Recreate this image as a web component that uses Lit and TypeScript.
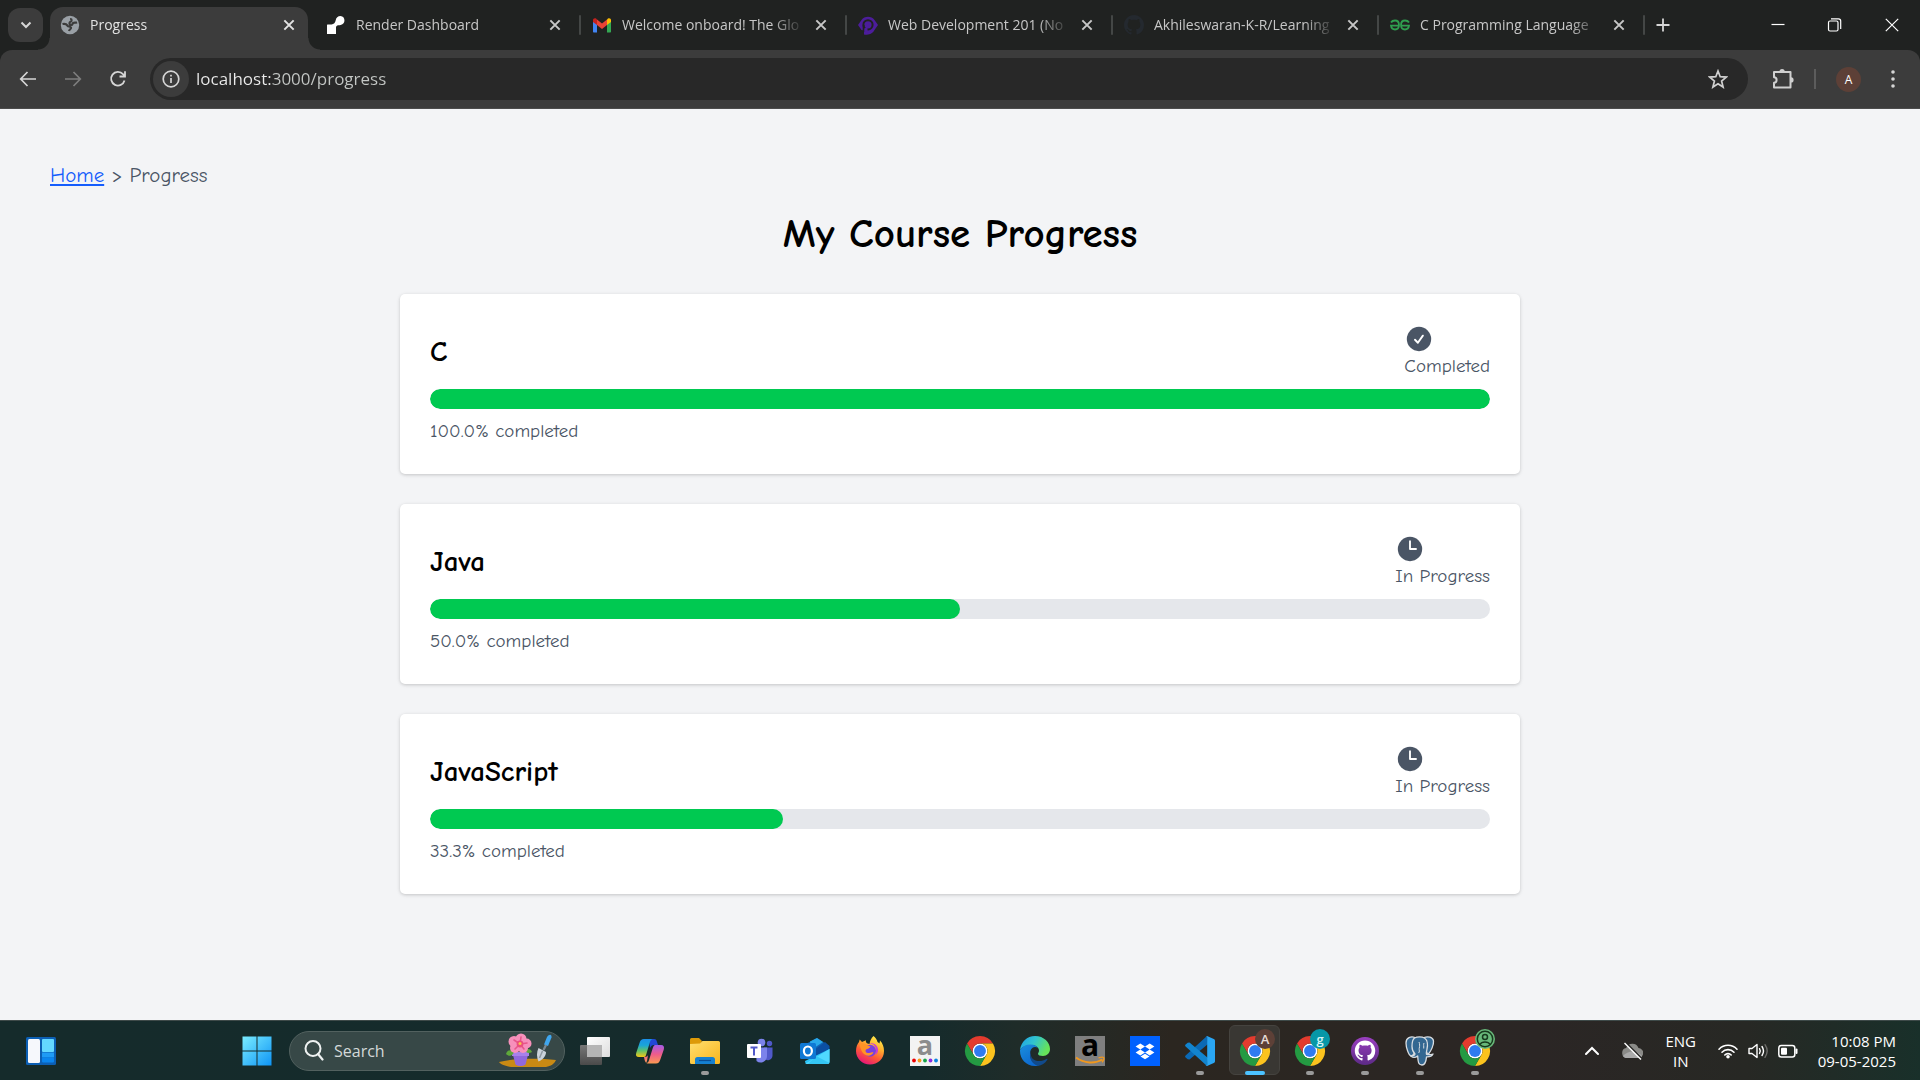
import { LitElement, html, svg, css, nothing, type SVGTemplateResult } from "lit";
import { customElement, property } from "lit/decorators.js";
import { classMap } from "lit/directives/class-map.js";
import { styleMap } from "lit/directives/style-map.js";

type Glyph = SVGTemplateResult;

const icon = (box: string, body: Glyph, cls = "icon") =>
  html`<svg class=${cls} viewBox=${box} aria-hidden="true">${body}</svg>`;

const octocat = "M8 0C3.58 0 0 3.58 0 8c0 3.54 2.29 6.53 5.47 7.59.4.07.55-.17.55-.38 0-.19-.01-.82-.01-1.49-2.01.37-2.53-.49-2.69-.94-.09-.23-.48-.94-.82-1.13-.28-.15-.68-.52-.01-.53.63-.01 1.08.58 1.23.82.72 1.21 1.87.87 2.33.66.07-.52.28-.87.51-1.07-1.78-.2-3.64-.89-3.64-3.95 0-.87.31-1.59.82-2.15-.08-.2-.36-1.02.08-2.12 0 0 .67-.21 2.2.82.64-.18 1.32-.27 2-.27.68 0 1.36.09 2 .27 1.53-1.04 2.2-.82 2.2-.82.44 1.1.16 1.92.08 2.12.51.56.82 1.27.82 2.15 0 3.07-1.87 3.75-3.65 3.95.29.25.54.73.54 1.48 0 1.07-.01 1.93-.01 2.2 0 .21.15.46.55.38A8.013 8.013 0 0016 8c0-4.42-3.58-8-8-8z";

/* ---------- browser window ---------- */

const closeGlyph = svg`<path d="M2 2l8 8M10 2l-8 8" fill="none" stroke="currentColor" stroke-width="1.7"/>`;

const tabs: { title: string; active?: boolean; glyph: Glyph }[] = [
  {
    title: "Progress",
    active: true,
    glyph: svg`<circle cx="10" cy="10" r="9.2" fill="#9aa0a6"/>
      <path d="M2.500 9c2.500-.6 4.200.4 5 1.700 1 1.200 3 .4 3.500 2 .3 1.500-1.700 1.500-2 3.300M17 7.200c-1.500.8-2.700.2-3.800.8-1.200.8-.4 2-1.800 2-1.300 0-2-.8-1.900-2 .1-1.400 1.700-1.200 2-2.300.2-.9-.6-1.500-.4-2.500" fill="none" stroke="#3c3c3c" stroke-width="2.200"/>`,
  },
  {
    title: "Render Dashboard",
    glyph: svg`<path d="M14.500 1C11.900 1 10 2.900 9.700 5.200 9.400 7.500 7.800 9.200 5.500 9.500 4.200 9.700 2 9.200 1 9.800V19h9v-6.500c0-1.200.9-2.200 2.200-2.300 1-.1 1.700-.1 2.500-.3A4.500 4.500 0 0 0 14.500 1z" fill="#fff"/>`,
  },
  {
    title: "Welcome onboard! The Glo",
    glyph: svg`<path d="M1 5v11.500c0 .6.4 1 1 1h3V9z" fill="#4285f4"/><path d="M19 5v11.500c0 .6-.4 1-1 1h-3V9z" fill="#34a853"/>
      <path d="M5 4.500l5 4 5-4V10l-5 4-5-4z" fill="#ea4335"/><path d="M1 5v2l4 3V4.500l-1-.9C2.800 2.700 1 3.500 1 5z" fill="#c5221f"/><path d="M19 5v2l-4 3V4.500l1-.9c1.200-.9 3-.1 3 1.400z" fill="#fbbc04"/>`,
  },
  {
    title: "Web Development 201 (No",
    glyph: svg`<path d="M0 10L3.500 5a8 8 0 0 1 13 0L20 10l-3.500 5a8 8 0 0 1-6.300 4.500H6V15.500l-2.500-.5z" fill="#4c1d9b"/>
      <circle cx="10" cy="9.800" r="4.600" fill="none" stroke="#202221" stroke-width="2"/><path d="M5.600 10v7" stroke="#202221" stroke-width="1.800"/><path d="M8 13v6.500" stroke="#4c1d9b" stroke-width="3"/>`,
  },
  {
    title: "Akhileswaran-K-R/Learning",
    glyph: svg`<g transform="scale(1.250)"><path d=${octocat} fill="#24292f"/></g>`,
  },
  {
    title: "C Programming Language",
    glyph: svg`<g fill="none" stroke="#2f9e4f" stroke-width="1.800"><path d="M1 7.500C2 5.800 3.700 5.500 5 5.500c2.500 0 4 2 4 4.500s-1.500 4.500-4 4.500c-2.200 0-3.700-1.500-4-3.800h8"/><path d="M19 7.500c-1-1.700-2.700-2-4-2-2.500 0-4 2-4 4.500s1.500 4.500 4 4.500c2.200 0 3.700-1.500 4-3.800h-8"/></g>`,
  },
];

@customElement("browser-window")
class BrowserWindow extends LitElement {
  static styles = css`
    :host { display: block; font-family: "Open Sans", "Noto Sans", sans-serif; color: #d6d6d6; }
    button { border: 0; padding: 0; margin: 0; background: none; color: inherit; font: inherit; display: grid; place-items: center; flex: none; }
    .strip { display: flex; height: 50px; background: #202221; padding-left: 8px; }
    .search { width: 35px; height: 34px; margin: 8px 7px 0 0; border-radius: 12px; background: #3c3c3c; }
    .search svg { width: 16px; height: 16px; }
    .tabs { display: flex; min-width: 0; }
    .tab { position: relative; display: flex; align-items: center; width: 266px; box-sizing: border-box; padding: 0 0 0 10px; color: #c7c7c7; font-size: 14px; }
    .tab .body { display: flex; align-items: center; flex: 1; min-width: 0; gap: 10px; }
    .favicon { width: 20px; height: 20px; flex: none; }
    .title { flex: none; width: 180px; white-space: nowrap; line-height: 26px; mask-image: linear-gradient(90deg, #000 150px, transparent 182px); }
    .close { width: 24px; height: 24px; margin-left: -3px; }
    .close svg { width: 14px; height: 14px; }
    .tab::after { content: ""; width: 2px; height: 20px; border-radius: 1px; background: #444746; margin-right: 1px; }
    .tab.active { color: #e3e3e3; }
    .tab.active::after { visibility: hidden; }
    .shape { position: absolute; left: 0; right: 8px; top: 7px; bottom: 0; background: #3c3c3c; border-radius: 13px 13px 0 0; }
    .shape::before, .shape::after { content: ""; position: absolute; bottom: 0; width: 12px; height: 12px; }
    .shape::before { left: -12px; background: radial-gradient(circle at 0 0, transparent 11px, #3c3c3c 12px); }
    .shape::after { right: -12px; background: radial-gradient(circle at 100% 0, transparent 11px, #3c3c3c 12px); }
    .active .body { position: relative; }
    .new { width: 34px; }
    .new svg { width: 16px; height: 16px; }
    .window { display: flex; margin-left: auto; }
    .window button { width: 57px; }
    .window svg { width: 16px; height: 16px; }
    .under { background: #202221; }
    .toolbar { display: flex; align-items: center; height: 58px; background: #3c3c3c; border-bottom: 1px solid #4c4c4c; border-radius: 12px 12px 0 0; padding: 0 5px; }
    .nav { width: 45px; height: 42px; }
    .nav svg { width: 20px; height: 20px; }
    .nav:disabled { color: #7d7d7d; }
    .address { flex: 1; display: flex; align-items: center; height: 42px; margin-left: 10px; border-radius: 21px; background: #282828; padding: 0 15px 0 3px; }
    .info { width: 36px; height: 36px; border-radius: 50%; background: #3c3c3c; }
    .info svg, .star svg { width: 20px; height: 20px; }
    .url { flex: 1; min-width: 0; border: 0; outline: 0; padding: 0; margin-left: 7px; font: inherit; font-size: 17px; line-height: 30px; color: transparent; background: linear-gradient(90deg, #ececec 76px, #c4c7c5 76px); background-clip: text; -webkit-background-clip: text; }
    .star { width: 30px; height: 30px; }
    .ext { width: 40px; height: 40px; margin-left: 14px; }
    .ext svg { width: 24px; height: 24px; }
    .rule { width: 2px; height: 20px; background: #5c5c5c; margin: 0 20px 0 12px; }
    .avatar { width: 25px; height: 25px; border-radius: 50%; background: #5d4037; color: #fff; font-size: 12px; line-height: 25px; }
    .more { width: 34px; height: 40px; margin: 0 5px 0 15px; }
    .more svg { width: 20px; height: 20px; }
  `;

  render() {
    return html`
      <div class="strip">
        <button class="search" aria-label="Search tabs">${icon("0 0 16 16", svg`<path d="M3.500 5.500L8 10l4.500-4.500" fill="none" stroke="currentColor" stroke-width="2"/>`)}</button>
        <div class="tabs">
          ${tabs.map((t) => html`
            <div class=${classMap({ tab: true, active: !!t.active })}>
              ${t.active ? html`<span class="shape"></span>` : nothing}
              <div class="body">
                ${icon("0 0 20 20", t.glyph, "favicon")}
                <span class="title">${t.title}</span>
                <button class="close" aria-label="Close tab">${icon("0 0 12 12", closeGlyph)}</button>
              </div>
            </div>`)}
        </div>
        <button class="new" aria-label="New tab">${icon("0 0 16 16", svg`<path d="M8 1.500v13M1.500 8h13" stroke="currentColor" stroke-width="1.800"/>`)}</button>
        <div class="window">
          <button aria-label="Minimize">${icon("0 0 16 16", svg`<path d="M1.500 7.500h13" stroke="#fff" stroke-width="1.200"/>`)}</button>
          <button aria-label="Restore">${icon("0 0 16 16", svg`<g fill="none" stroke="#fff" stroke-width="1.200"><rect x="1.500" y="4" width="9.500" height="10" rx="1.500"/><path d="M4 1.800h7.500a2.200 2.200 0 0 1 2.200 2.200v8"/></g>`)}</button>
          <button aria-label="Close">${icon("0 0 16 16", svg`<path d="M1.800 1.800l12.400 12.400M14.200 1.800L1.800 14.200" stroke="#fff" stroke-width="1.200"/>`)}</button>
        </div>
      </div>
      <div class="under">
        <div class="toolbar">
          <button class="nav" aria-label="Back">${icon("0 0 20 20", svg`<path d="M18 10H3M9.500 3L2.700 10l6.800 7" fill="none" stroke="currentColor" stroke-width="1.700"/>`)}</button>
          <button class="nav" aria-label="Forward" disabled>${icon("0 0 20 20", svg`<path d="M2 10h15M10.500 3l6.800 7-6.800 7" fill="none" stroke="currentColor" stroke-width="1.700"/>`)}</button>
          <button class="nav" aria-label="Reload">${icon("0 0 20 20", svg`<path d="M16.500 11.500A6.800 6.800 0 1 1 15 5.200l1.800 1.800M17 2.200v5.300h-5.500" fill="none" stroke="currentColor" stroke-width="1.800"/>`)}</button>
          <div class="address">
            <button class="info" aria-label="View site information">${icon("0 0 20 20", svg`<circle cx="10" cy="10" r="7.800" fill="none" stroke="currentColor" stroke-width="1.700"/><path d="M10 9v5M10 5.800v1.800" stroke="currentColor" stroke-width="1.700"/>`)}</button>
            <input class="url" type="text" aria-label="Address" value="localhost:3000/progress">
            <button class="star" aria-label="Bookmark this tab">${icon("0 0 20 20", svg`<path d="M10 2l2.200 5.700 6 .4-4.600 3.900 1.500 6L10 14.700 4.900 18l1.500-6L1.800 8.100l6-.4z" fill="none" stroke="#d0d0d0" stroke-width="1.700"/>`)}</button>
          </div>
          <button class="ext" aria-label="Extensions">${icon("0 0 24 24", svg`<path d="M4 5h16.500v15.500H4v-4.800c1.500 0 2.600-1.200 2.600-2.700S5.500 10.300 4 10.300z" fill="none" stroke="#d0d0d0" stroke-width="2" stroke-linejoin="round"/><path d="M9.500 4.500a2.600 2.600 0 0 1 5.200 0zM21 10.300a2.600 2.600 0 0 1 0 5.200z" fill="#d0d0d0"/>`)}</button>
          <span class="rule"></span>
          <button class="avatar" aria-label="Profile">A</button>
          <button class="more" aria-label="Menu">${icon("0 0 20 20", svg`<g fill="#d6d6d6"><circle cx="10" cy="3" r="1.800"/><circle cx="10" cy="10" r="1.800"/><circle cx="10" cy="17" r="1.800"/></g>`)}</button>
        </div>
      </div>`;
  }
}

/* ---------- course card ---------- */

@customElement("course-card")
class CourseCard extends LitElement {
  @property() name = "";
  @property({ type: Number }) percent = 0;

  static styles = css`
    :host { display: block; background: #fff; border-radius: 5px; padding: 30px; box-shadow: 0 1px 4px rgb(0 0 0 / 0.1), 0 1px 3px rgb(0 0 0 / 0.1); }
    .head { display: flex; justify-content: space-between; align-items: center; margin-bottom: 10px; }
    h2 { margin: 0; font-size: 29px; line-height: 36px; font-weight: 700; }
    .status { color: #4a5565; font-size: 19px; line-height: 25px; }
    .status svg { display: block; width: 30px; height: 30px; }
    .track { height: 20px; border-radius: 10px; background: #e5e7eb; overflow: hidden; }
    .fill { height: 100%; border-radius: 10px; background: #00c951; }
    p { margin: 10px 0 0; color: #4a5565; font-size: 19px; line-height: 25px; }
  `;

  render() {
    const done = this.percent >= 100;
    const mark = done
      ? svg`<path d="M8.800 12.600l2.300 2.400 4-5.700" fill="none" stroke="#fff" stroke-width="1.500" stroke-linecap="round" stroke-linejoin="round"/>`
      : svg`<path d="M12 5.700V12h4.800" fill="none" stroke="#fff" stroke-width="1.500" stroke-linecap="round" stroke-linejoin="round"/>`;
    return html`
      <div class="head">
        <h2>${this.name}</h2>
        <div class="status">
          ${icon("0 0 24 24", svg`<circle cx="12" cy="12" r="9.750" fill="#4a5565"/>${mark}`)}
          ${done ? "Completed" : "In Progress"}
        </div>
      </div>
      <div class="track" role="progressbar" aria-label=${this.name} aria-valuenow=${this.percent}>
        <div class="fill" style=${styleMap({ width: `${this.percent}%` })}></div>
      </div>
      <p>${this.percent.toFixed(1)}% completed</p>`;
  }
}

/* ---------- taskbar ---------- */

const chrome = svg`
  <circle cx="24" cy="24" r="12" fill="#fff"/>
  <path d="M24,12H44.7812a23.9939,23.9939,0,0,0-41.5639.0029L13.6079,30l.0093-.0024A11.9852,11.9852,0,0,1,24,12Z" fill="#e33b2e"/>
  <circle cx="24" cy="24" r="9.500" fill="#2f7bf0"/>
  <path d="M34.3913,30.0029,24.0007,48A23.994,23.994,0,0,0,44.78,12.0031H23.9989l-.0025.0093A11.985,11.985,0,0,1,34.3913,30.0029Z" fill="#fcc31e"/>
  <path d="M13.6086,30.0031,3.218,12.006A23.994,23.994,0,0,0,24.0025,48L34.3931,30.0029l-.0067-.0068a11.9852,11.9852,0,0,1-20.7778.007Z" fill="#249a42"/>`;

interface App {
  name: string;
  box: string;
  glyph: Glyph;
  running?: boolean;
  active?: boolean;
  badge?: unknown;
  badgeClass?: string;
}

const apps: App[] = [
  {
    name: "Task view", box: "0 0 30 30",
    glyph: svg`<defs><linearGradient id="tv" x2="0" y2="1"><stop stop-color="#777"/><stop offset="1" stop-color="#4a4a4a"/></linearGradient><linearGradient id="tw" x2="1" y2="1"><stop stop-color="#fff"/><stop offset="1" stop-color="#ddd"/></linearGradient></defs>
      <rect x="0" y="9" width="22" height="20" rx="1" fill="url(#tv)"/><rect x="7" y="1" width="23" height="20" rx="1" fill="url(#tw)"/><path d="M7 9h15v12H7z" fill="#b5b5b5"/>`,
  },
  {
    name: "Copilot", box: "0 0 30 30",
    glyph: svg`<defs><linearGradient id="cpa" x2="0" y2="1"><stop stop-color="#1b8fe8"/><stop offset=".35" stop-color="#1aa5d8"/><stop offset=".65" stop-color="#5fc26a"/><stop offset="1" stop-color="#f6c714"/></linearGradient>
      <linearGradient id="cpb" x2="0" y2="1"><stop stop-color="#a55be8"/><stop offset=".5" stop-color="#ee5c8b"/><stop offset="1" stop-color="#fb9a52"/></linearGradient></defs>
      <path d="M14 3h5c2 0 2.500 1 3 3l1 3h-4c-2 0-3 1-4 3z" fill="#2347d6"/>
      <path d="M9 3h9c-1.500 0-2.600 1.300-3.200 3.500l-3.600 12C10.500 21 9.500 21 8 21H4c-2.700 0-3.500-1.500-2.800-4L4.500 7C5.500 4 6.500 3 9 3z" fill="url(#cpa)"/>
      <path d="M11 27c2 0 2.600-1 3.200-3.500l3.600-11.500c.7-2.500 1.700-3 3.200-3h5c2.700 0 3.500 2 2.800 4.500L25.500 23c-1 3-2 4.500-4.500 4.500h-8c-1.500 0-2.500-.5-3.500-4L9 21c3 0 3.500-1 4-2l-1 6z" fill="url(#cpb)"/>`,
  },
  {
    name: "File Explorer", box: "0 0 30 30", running: true,
    glyph: svg`<defs><linearGradient id="fe" x2="1" y2="1"><stop stop-color="#ffdf70"/><stop offset="1" stop-color="#f9b51c"/></linearGradient></defs>
      <path d="M0 3.500A1.500 1.500 0 0 1 1.500 2H9l3 3-2 5H0z" fill="#dd9a08"/><path d="M0 8l10-.5L12.500 5H28.500A1.500 1.500 0 0 1 30 6.500V26.500a1.500 1.500 0 0 1-1.500 1.500h-27A1.500 1.500 0 0 1 0 26.500z" fill="url(#fe)"/>
      <path d="M5 28v-4.500A2.500 2.500 0 0 1 7.500 21h15a2.500 2.500 0 0 1 2.500 2.500V28z" fill="#1580d0"/><path d="M9 24.500h12" stroke="#0a4d94" stroke-width="1.200"/>`,
  },
  {
    name: "Teams", box: "0 0 30 30",
    glyph: svg`<circle cx="16.500" cy="6.500" r="3.800" fill="#7b83eb"/><circle cx="24.500" cy="7.500" r="2.700" fill="#5059c9"/>
      <path d="M19 11.500h8.500v8a4.700 4.700 0 0 1-8.500 2.700z" fill="#5059c9"/><path d="M11 11.500h11V19a6.500 7 0 0 1-10.500 6z" fill="#7b83eb"/>
      <rect x="2" y="8" width="14" height="14" rx="1" fill="#fff"/><path d="M5.500 11.500h7M9 11.500v8" stroke="#5059c9" stroke-width="2"/>`,
  },
  {
    name: "Outlook", box: "0 0 30 30",
    glyph: svg`<path d="M4 9L17 2l12 8v3L16 22 4 16z" fill="#1066b8"/><path d="M10 5.500L17 2l6 4-12 8z" fill="#28a8ea"/><path d="M14 14l11-8 4.500 4v4L16 22z" fill="#0b4fa3"/>
      <path d="M29.500 13v12.500a2.500 2.500 0 0 1-2.500 2.500H8a3 3 0 0 1-3-3z" fill="#2bc3f7"/><path d="M29.500 13L5 28h22a2.500 2.500 0 0 0 2.500-2.500z" fill="#50d9ff"/><path d="M16 20l13.500 7-2.500 1H8z" fill="#35c6f4"/>
      <rect y="7" width="16" height="16" rx="1.500" fill="#0f78d4"/><ellipse cx="7.900" cy="15" rx="4" ry="4.500" fill="none" stroke="#fff" stroke-width="2.200"/>`,
  },
  {
    name: "Firefox", box: "0 0 30 30",
    glyph: svg`<defs><linearGradient id="ff" x1=".8" x2=".3" y2="1"><stop stop-color="#fff44f"/><stop offset=".35" stop-color="#ffb02e"/><stop offset=".65" stop-color="#ff5a36"/><stop offset="1" stop-color="#e5127d"/></linearGradient></defs>
      <path d="M18.500 0c2 1.500 3.500 3.500 4 6 .8.300 1.500 1 2 1.500l.5-3c2.800 3 4 6.500 4 10.500C29 23 22.800 28.500 15 28.500S1 22.500 1 15c0-4 1.300-7 3-9l.7-2.500L7 6l4-1.800c-.5 1.500.3 2.500 1.500 3.300l2 .5C15 5 16 2 18.500 0z" fill="url(#ff)"/>
      <circle cx="15" cy="14.800" r="6" fill="#7a3fe0"/><path d="M4.500 8c3-1 5 0 7 1l4 1.500c-1 2-3 2-4.500 3-1 1-.5 3 1.500 3.500 2.500.5 3.500-1.500 6-.5-1.500 3-5 4-8 2.500-4-2-5-7-6-11z" fill="#ff9425"/><path d="M14 8c4-1 7 2 7 6.500 0 2-.5 3-1 4 3-.5 4-5 2-8s-5-4-8-2.500z" fill="#c63bd8"/>`,
  },
  {
    name: "Amazon shopping", box: "0 0 30 30",
    glyph: svg`<path d="M0 0h30v30H0z" fill="#f3f3f3"/><text x="15" y="19" text-anchor="middle" font-size="27" font-weight="700" font-family="Open Sans, sans-serif" fill="#8c8c8c">a</text>
      <circle cx="4" cy="24.500" r="1.900" fill="#e00"/><circle cx="9.500" cy="24.500" r="1.900" fill="#f89a1c"/><circle cx="15" cy="24.500" r="1.900" fill="#16a34a"/><circle cx="20.500" cy="24.500" r="1.900" fill="#8a2be2"/><circle cx="26" cy="24.500" r="1.900" fill="#0b84e0"/>`,
  },
  { name: "Chrome", box: "0 0 48 48", glyph: chrome },
  {
    name: "Edge", box: "0 0 30 30",
    glyph: svg`<defs><linearGradient id="ea" x2="1" y2=".4"><stop stop-color="#1e9fe8"/><stop offset=".5" stop-color="#31c4cf"/><stop offset="1" stop-color="#66e35a"/></linearGradient><linearGradient id="eb" x2=".6" y2="1"><stop stop-color="#1b8fdc"/><stop offset="1" stop-color="#0c68cf"/></linearGradient></defs>
      <path d="M0 14C1 6 7 0 15 0c9 0 15 6.500 15 13 0 4-3 7-7 7-3 0-5-1-5-2.300 0-.8 1-1.200 1-3.200 0-3-3-5.500-7.500-5.500C6 9 2 11 0 14z" fill="url(#ea)"/>
      <path d="M0 14c2-3.500 5.500-5.500 10.500-5.500 4 0 6.500 1.800 7.500 3.500-1-.7-2-1-3-1-3 0-5 3-5 7 0 6 5 10 9 11.500-2 .5-3 .5-4 .5C6 30 0 23 0 15z" fill="url(#eb)"/>
      <path d="M11.500 14c-2 5 0 9 4 10.500 4 1.300 8 .3 11-1.500.8-.4 1.200.2.800.8-2.300 3.500-5.500 5.700-9.300 6.200C12 28 8.500 22 10.500 16z" fill="#114a8b"/>`,
  },
  {
    name: "Amazon", box: "0 0 30 30",
    glyph: svg`<path d="M0 0h30v30H0z" fill="#7f7f7f"/><text x="15" y="20" text-anchor="middle" font-size="30" font-weight="700" font-family="Open Sans, sans-serif" fill="#000">a</text>
      <path d="M1 21.500c8 6 19 6.500 26.500 2" fill="none" stroke="#f0981e" stroke-width="2"/><path d="M23.500 21.800c2-.6 4.500-.8 5.200-.3.5 1-.4 3.300-1.700 4.700" fill="none" stroke="#f0981e" stroke-width="1.300"/>`,
  },
  {
    name: "Dropbox", box: "0 0 30 30",
    glyph: svg`<path d="M0 0h30v30H0z" fill="#0061fe"/><path d="M10.300 7.500l4.700 3-4.700 3-4.700-3zM19.700 7.500l4.700 3-4.700 3-4.700-3zM10.300 13.500l4.700 3-4.700 3-4.700-3zM19.700 13.500l4.700 3-4.700 3-4.700-3zM15 17.700l4.500 2.700-4.500 2.800-4.500-2.800z" fill="#fff"/>`,
  },
  {
    name: "Visual Studio Code", box: "0 0 30 30", running: true,
    glyph: svg`<path d="M22 0l1 8L4.500 23.500 2.700 23.300.6 21.500c-.7-.6-.6-1.400 0-2z" fill="#0b69b5"/><path d="M22 30l1-8L4.500 6.500l-1.800.2L.6 8.500c-.7.6-.6 1.400 0 2z" fill="#1284cf"/>
      <path d="M22 0l6.800 3c.7.400 1.200 1 1.200 1.800v20.400c0 .8-.5 1.500-1.200 1.800L22 30c-.8.200-1.300-.1-1.700-.6.9.6 1.900 0 1.900-1.100V1.700c0-1.100-1-1.700-1.900-1.100.4-.5.900-.8 1.700-.6z" fill="#2aa6f3"/>`,
  },
  { name: "Chrome, profile A", box: "0 0 48 48", glyph: chrome, running: true, active: true, badge: "A", badgeClass: "brown" },
  { name: "Chrome, profile g", box: "0 0 48 48", glyph: chrome, running: true, badge: "g", badgeClass: "teal" },
  {
    name: "GitHub Desktop", box: "0 0 30 30", running: true,
    glyph: svg`<defs><linearGradient id="gh" x2="0" y2="1"><stop stop-color="#9a3fc0"/><stop offset="1" stop-color="#5c2a86"/></linearGradient></defs><circle cx="15" cy="15" r="14" fill="url(#gh)"/><g transform="translate(4.800 4.500) scale(1.280)"><path d=${octocat} fill="#fff"/></g>`,
  },
  {
    name: "PostgreSQL", box: "0 0 30 30", running: true,
    glyph: svg`<g fill="#336791" stroke="#d8dde2" stroke-width="1.300" stroke-linejoin="round"><path d="M10 1.500C6 0 1 1.500 1 7c0 4 2.500 12.500 5 13 1.500.3 2.500-2 3.500-3z"/><path d="M19 1.500c4-1.500 9-.5 9.500 3.500.4 4-2.500 10-5 13l-4-3z"/>
      <path d="M9.500 2C12 .5 17 .5 19.500 2c3 2 3.500 7 2.500 11-.3 2-1 3.500-.5 5.300 2 .6 4.500.3 6.500-.3-1 2-4 3-6.500 2.800-.3 3-.5 8.200-4.500 8.200s-4-4-4.300-9c-2 1.500-5 1.500-6.700.3 1.500-.8 3.500-.3 4-2.300-2-2-3-3.500-3-7.500C7 7 7.500 3.500 9.500 2z"/></g>
      <path d="M14 6c.8 2 .8 4 .2 6.500-.2 1.500.8 3.500-.7 4.500M19 7c-.8 1.500 0 3.500-.3 5.500" stroke="#d8dde2" stroke-width="1" fill="none"/>`,
  },
  {
    name: "Chrome, guest profile", box: "0 0 48 48", glyph: chrome, running: true, badgeClass: "green",
    badge: icon("0 0 20 20", svg`<circle cx="10" cy="10" r="7.700" fill="none" stroke="#173a1e" stroke-width="1.500"/><circle cx="10" cy="8" r="2.500" fill="none" stroke="#173a1e" stroke-width="1.500"/><path d="M4.800 15.500c2-3.500 8.400-3.500 10.400 0" fill="none" stroke="#173a1e" stroke-width="1.500"/>`, "guest"),
  },
];

@customElement("task-bar")
class TaskBar extends LitElement {
  static styles = css`
    :host { display: flex; align-items: center; height: 60px; box-sizing: border-box; border-top: 1px solid #3e4a49; font-family: "Open Sans", "Noto Sans", sans-serif; color: #fff;
      background: linear-gradient(90deg, #152b2b 0, #152b2c 48%, #1f2c29 53%, #2b2620 61%, #2b2625 80%, #272824 91%, #19302a 100%); }
    button { position: relative; border: 0; padding: 0; background: none; color: inherit; font: inherit; display: grid; place-items: center; flex: none; }
    .app { width: 55px; height: 60px; }
    .app.first { margin: 0 161px 0 13px; }
    .icon { width: 30px; height: 30px; overflow: visible; }
    .search { display: flex; align-items: center; width: 276px; height: 40px; box-sizing: border-box; border: 1px solid #52615f; border-radius: 20px; background: #374847; padding: 0 7px 0 14px; margin: 0 2px 0 5px; }
    .search svg { flex: none; }
    .lens { width: 20px; height: 24px; }
    .search input { flex: 1; min-width: 0; border: 0; outline: 0; background: none; color: #fff; font: inherit; font-size: 16px; padding: 0; margin-left: 10px; line-height: 24px; }
    .search input::placeholder { color: #d3d9d9; opacity: 1; }
    .bloom { width: 58px; height: 36px; }
    .active::before { content: ""; position: absolute; inset: 4px 2px 6px; background: #393733; border: 1px solid #45433f; border-radius: 6px; }
    .active .icon { position: relative; }
    .running::after { content: ""; position: absolute; left: 50%; bottom: 6px; width: 8px; height: 4px; margin-left: -4px; border-radius: 2px; background: #9a9a9a; }
    .running.active::after { width: 20px; margin-left: -10px; background: #4cc2ff; }
    .badge { position: absolute; left: 28px; top: 8px; width: 20px; height: 20px; border-radius: 50%; font-size: 13px; line-height: 20px; font-weight: 600; text-align: center; }
    .brown { background: #5d4037; color: #e6dcd8; }
    .teal { background: #0797a7; color: #d5f4f6; }
    .green { background: #68b97a; }
    .guest { display: block; width: 20px; height: 20px; }
    .tray { display: flex; align-items: center; margin-left: auto; padding-right: 24px; font-size: 15px; line-height: 20px; }
    .tray .chev { width: 14px; height: 14px; margin-right: 22px; }
    .tray .cloud { width: 22px; height: 20px; margin-right: 22px; }
    .lang { width: 32px; text-align: center; margin-right: 21px; }
    .status { display: flex; gap: 10px; margin-right: 20px; }
    .status svg { width: 20px; height: 20px; }
    .clock { text-align: right; }
  `;

  renderApp(a: App) {
    return html`<button class=${classMap({ app: true, running: !!a.running, active: !!a.active })} aria-label=${a.name}>
      ${icon(a.box, a.glyph)}
      ${a.badge ? html`<span class="badge ${a.badgeClass ?? ""}">${a.badge}</span>` : nothing}
    </button>`;
  }

  render() {
    return html`
      <button class="app first" aria-label="Widgets">${icon("0 0 30 30", svg`<rect y="1" width="30" height="28" rx="1.500" fill="#0c5fb4"/><rect x="2" y="3" width="12" height="24" rx="1.500" fill="#f6f8fc"/><rect x="16" y="3" width="12" height="13" rx="1" fill="#64d8ff"/><rect x="16" y="16.500" width="12" height="5" fill="#1f9bf5"/><rect x="16" y="21.500" width="12" height="5" rx="1" fill="#0a85ee"/>`)}</button>
      <button class="app" aria-label="Start">${icon("0 0 30 30", svg`<defs><linearGradient id="st" gradientUnits="userSpaceOnUse" x1="0" y1="0" x2="30" y2="30"><stop stop-color="#7ceeff"/><stop offset="1" stop-color="#0c93f6"/></linearGradient></defs><path d="M.500.500h14v14h-14zM15.500.500h14v14h-14zM.500 15.500h14v14h-14zM15.500 15.500h14v14h-14z" fill="url(#st)"/>`)}</button>
      <div class="search">
        ${icon("0 0 20 24", svg`<circle cx="9" cy="9.500" r="7.500" fill="none" stroke="#eef1f1" stroke-width="2"/><path d="M14 15l4.500 5.500" stroke="#eef1f1" stroke-width="2.200" stroke-linecap="round"/>`, "lens")}
        <input type="text" placeholder="Search" aria-label="Search">
        ${icon("0 -2 58 36", svg`<path d="M0 27c15-4 40-4 57-2-2 4-5 6-10 7H12C7 31 2 30 0 27z" fill="#c98a14"/>
          <path d="M14 20h15l-2.500 9.500c-3 2-7 2-10 0z" fill="#9068dd"/><path d="M13 17h17v4H13z" fill="#a781ea"/><path d="M7 19c1-4 5-5 8-2-1 4-5 5-8 2zM33 17c-1-3-4-4-7-2 1 3 4 4 7 2z" fill="#5ea83a"/>
          <g fill="#f790bb"><circle cx="15" cy="6.500" r="5.500"/><circle cx="22" cy="4" r="5.500"/><circle cx="27.500" cy="8.500" r="5"/><circle cx="24" cy="13" r="5"/><circle cx="16" cy="13" r="5"/></g>
          <g stroke="#e8568b" stroke-width="1.600" stroke-linecap="round"><path d="M21 9l-6-4M21 9l1-7M21 9l7-1M21 9l4 5M21 9l-5 5"/></g><circle cx="21" cy="9" r="3.400" fill="#ea4f7f"/><circle cx="21" cy="8.500" r="1.500" fill="#f9c44e"/>
          <path d="M48 2c2-3 5-3 4.500.500L49 11l-4-1.500z" fill="#3fa6ee"/><path d="M46 9.500l2 1-2.500 5-2-1z" fill="#7b8791"/><path d="M39.500 13l7.500 4c0 4-3 7.500-7.500 9.500-2-4-2-9.500 0-13.500z" fill="#cbd3da"/><path d="M43.500 16l-3 7" stroke="#909aa3" stroke-width="1.500"/>`, "bloom")}
      </div>
      ${apps.map((a) => this.renderApp(a))}
      <div class="tray">
        ${icon("0 0 14 14", svg`<path d="M1 10l6-6 6 6" fill="none" stroke="#fff" stroke-width="2" stroke-linecap="round"/>`, "chev")}
        ${icon("0 0 22 20", svg`<path d="M6 17a5 5 0 0 1-.8-9.900A6.500 6.500 0 0 1 17.500 7 5 5 0 0 1 17 17z" fill="#8b8b88"/><path d="M2 15c5-6 14-6 19 0-1 2-2 2-4 2H6c-2 0-3-.5-4-2z" fill="#aaa"/><path d="M5 2l16 16" stroke="#272624" stroke-width="2"/><path d="M3.500 2L20 18.500" stroke="#fff" stroke-width="1.400"/>`, "cloud")}
        <div class="lang">ENG<br>IN</div>
        <div class="status">
          ${icon("0 0 20 20", svg`<g fill="none" stroke="#fff" stroke-width="1.600" stroke-linecap="round"><path d="M1 8.200c5-5.200 13-5.200 18 0M4 11.200c3.300-3.500 8.700-3.500 12 0M6.800 14c1.800-1.900 4.600-1.900 6.400 0"/></g><circle cx="10" cy="15.800" r="1.800" fill="#fff"/>`)}
          ${icon("0 0 20 20", svg`<g fill="none" stroke="#fff" stroke-width="1.400" stroke-linecap="round" stroke-linejoin="round"><path d="M1 7.500h3L9 3.500v13l-5-4H1z"/><path d="M11.500 7.700c1 1.500 1 3.200 0 4.700M14 5.500c2 3 2 6 0 9"/><path d="M17 3.700c2.800 4 2.800 8.500 0 12.600" stroke="#6d6d6a"/></g>`)}
          ${icon("0 0 20 20", svg`<rect x=".8" y="4.500" width="16" height="11.500" rx="2.500" fill="none" stroke="#fff" stroke-width="1.500"/><rect x="3" y="6.700" width="6" height="7.100" rx="1" fill="#fff"/><path d="M18.500 8.500v3.500" stroke="#fff" stroke-width="2" stroke-linecap="round"/>`)}
        </div>
        <div class="clock">10:08 PM<br>09-05-2025</div>
      </div>`;
  }
}

/* ---------- page ---------- */

const courses = [
  { name: "C", percent: 100 },
  { name: "Java", percent: 50 },
  { name: "JavaScript", percent: 33.3 },
];

@customElement("app-root")
class AppRoot extends LitElement {
  static styles = css`
    :host { display: flex; flex-direction: column; min-height: 100vh; }
    main { flex: 1; background: #f3f4f6; padding: 51px 50px 50px; font-family: "Comic Neue", "Comic Sans MS", "Open Sans", sans-serif; color: #000; }
    nav { font-size: 21px; line-height: 30px; color: #4a5565; margin-bottom: 20px; }
    a { color: #155dfc; }
    h1 { margin: 0 0 36px; font-size: 41px; line-height: 48px; font-weight: 700; text-align: center; }
    .list { display: grid; gap: 30px; max-width: 1120px; margin: 0 auto; }
  `;

  render() {
    return html`
      <browser-window></browser-window>
      <main>
        <nav aria-label="Breadcrumb"><a href="#home">Home</a> &gt; Progress</nav>
        <h1>My Course Progress</h1>
        <div class="list">
          ${courses.map((c) => html`<course-card .name=${c.name} .percent=${c.percent}></course-card>`)}
        </div>
      </main>
      <task-bar></task-bar>`;
  }
}
